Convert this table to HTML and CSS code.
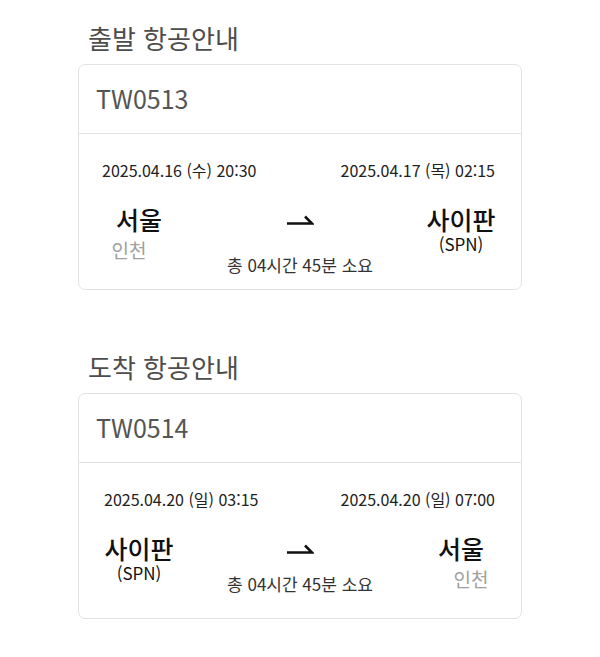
FILE: index.html
```html
<!DOCTYPE html>
<html lang="ko">
<head>
<meta charset="utf-8">
<link rel="stylesheet" href="styles.css">
</head>
<body>
<main class="page">
  <section class="section">
    <h2 class="section-title">출발 항공안내</h2>
    <div class="card">
      <div class="card-head">TW0513</div>
      <div class="card-body">
        <div class="dates">
          <span class="date">2025.04.16 (수) 20:30</span>
          <span class="date">2025.04.17 (목) 02:15</span>
        </div>
        <div class="route">
          <div class="place">
            <div class="city">서울</div>
            <div class="airport airport-left">인천</div>
          </div>
          <div class="mid">
            <svg class="arrow" width="28" height="14" viewBox="0 0 28 14"><path d="M1 11.5H26L19 4.5" fill="none" stroke="#111" stroke-width="2.6"/></svg>
            <div class="duration duration-low">총 04시간 45분 소요</div>
          </div>
          <div class="place">
            <div class="city">사이판</div>
            <div class="code">(SPN)</div>
          </div>
        </div>
      </div>
    </div>
  </section>
  <section class="section">
    <h2 class="section-title">도착 항공안내</h2>
    <div class="card">
      <div class="card-head">TW0514</div>
      <div class="card-body">
        <div class="dates dates-alt">
          <span class="date">2025.04.20 (일) 03:15</span>
          <span class="date">2025.04.20 (일) 07:00</span>
        </div>
        <div class="route">
          <div class="place">
            <div class="city">사이판</div>
            <div class="code">(SPN)</div>
          </div>
          <div class="mid">
            <svg class="arrow" width="28" height="14" viewBox="0 0 28 14"><path d="M1 11.5H26L19 4.5" fill="none" stroke="#111" stroke-width="2.6"/></svg>
            <div class="duration">총 04시간 45분 소요</div>
          </div>
          <div class="place">
            <div class="city">서울</div>
            <div class="airport airport-right">인천</div>
          </div>
        </div>
      </div>
    </div>
  </section>
</main>
</body>
</html>
```
FILE: styles.css
```css
* { box-sizing: border-box; }
html, body { margin: 0; padding: 0; background: #fff; }
body {
  font-family: "Noto Sans CJK KR", "Noto Sans", sans-serif;
  color: #111;
}
.page {
  width: 444px;
  margin-left: 78px;
  padding-top: 20px;
}
.section { margin-bottom: 59px; }
.section-title {
  margin: 0 0 8px 10px;
  font-size: 26px;
  line-height: 36px;
  font-weight: 400;
  color: #4d4d4d;
}
.card {
  border: 1px solid #e3e3e3;
  border-radius: 7px;
  height: 226px;
}
.card-head {
  height: 69px;
  border-bottom: 1px solid #e3e3e3;
  padding: 0 0 3px 17px;
  display: flex;
  align-items: center;
  font-size: 25px;
  color: #555;
}
.card-body { padding-top: 24px; }
.dates {
  display: flex;
  justify-content: space-between;
  padding: 0 26px 0 23px;
  font-size: 16px;
  line-height: 24px;
  color: #222;
}
.dates-alt { padding-left: 25px; }
.route {
  display: flex;
  margin-top: 22px;
}
.place {
  width: 120px;
  display: flex;
  flex-direction: column;
  align-items: center;
}
.city {
  font-size: 25px;
  line-height: 30px;
  font-weight: 500;
  color: #111;
}
.code {
  font-size: 17px;
  line-height: 20px;
  color: #111;
}
.airport {
  font-size: 19px;
  line-height: 24px;
  color: #a0a0a0;
  margin-top: 4px;
}
.airport-left { margin-right: 20px; }
.airport-right { margin-left: 20px; }
.mid {
  flex: 1;
  display: flex;
  flex-direction: column;
  align-items: center;
}
.arrow { display: block; margin-top: 8px; }
.duration {
  margin-top: 17px;
  font-size: 17px;
  line-height: 24px;
  color: #333;
}
.duration-low { margin-top: 27px; }
```
